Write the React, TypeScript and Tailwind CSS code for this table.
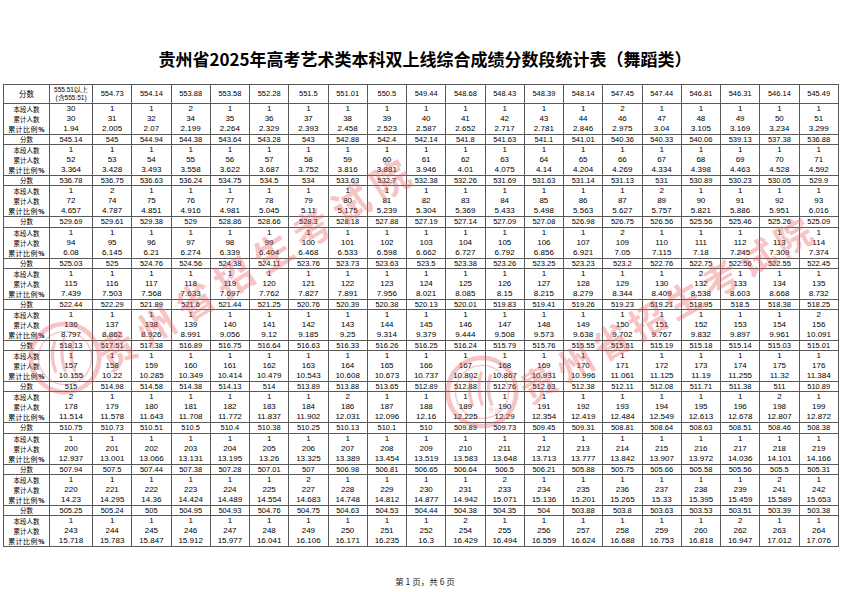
import { Fragment } from 'react';

// 第一行分数（首格单独处理）
const HEAD = '554.73 554.14 553.88 553.58 552.28 551.5 551.01 550.5 549.44 548.68 548.43 548.39 548.14 547.45 547.44 546.81 546.31 546.14 545.49'.split(' ');

// 每段累计人数
const CUM = [
  '30 31 32 34 35 36 37 38 39 40 41 42 43 44 46 47 48 49 50 51',
  '52 53 54 55 56 57 58 59 60 61 62 63 64 65 66 67 68 69 70 71',
  '72 74 75 76 77 78 79 80 81 82 83 84 85 86 87 89 90 91 92 93',
  '94 95 96 97 98 99 100 101 102 103 104 105 106 107 109 110 111 112 113 114',
  '115 116 117 118 119 120 121 122 123 124 125 126 127 128 129 130 132 133 134 135',
  '136 137 138 139 140 141 142 143 144 145 146 147 148 149 150 151 152 153 154 156',
  '157 158 159 160 161 162 163 164 165 166 167 168 169 170 171 172 173 174 175 176',
  '178 179 180 181 182 183 184 186 187 188 189 190 191 192 193 194 195 196 198 199',
  '200 201 202 203 204 205 206 207 208 209 210 211 212 213 214 215 216 217 218 219',
  '220 221 222 223 224 225 227 228 229 230 231 233 234 235 236 237 238 239 241 242',
  '243 244 245 246 247 248 249 250 251 252 254 255 256 257 258 259 260 262 263 264',
].map((r) => r.split(' ').map(Number));

// 段与段之间的分数行
const SCORES = [
  '545.14 545 544.94 544.38 543.64 543.28 543 542.88 542.4 542.14 541.8 541.63 541.1 541.01 540.36 540.33 540.06 539.13 537.38 536.88',
  '536.78 536.75 536.63 536.24 534.75 534.5 534 533.63 532.7 532.38 532.26 531.69 531.63 531.14 531.13 531 530.89 530.23 530.05 529.9',
  '529.69 529.61 529.38 529 528.86 528.66 528.3 528.18 527.88 527.19 527.14 527.09 527.08 526.98 526.75 526.56 525.56 525.46 525.26 525.09',
  '525.03 525 524.76 524.56 524.38 524.11 523.76 523.73 523.63 523.5 523.38 523.26 523.25 523.23 523.2 522.76 522.75 522.56 522.55 522.45',
  '522.44 522.29 521.89 521.6 521.44 521.25 520.76 520.39 520.38 520.13 520.01 519.83 519.41 519.26 519.23 519.21 518.95 518.5 518.38 518.25',
  '518.13 517.51 517.38 516.89 516.75 516.64 516.63 516.33 516.26 516.25 516.24 515.79 515.76 515.55 515.51 515.19 515.18 515.14 515.03 515.01',
  '515 514.98 514.58 514.38 514.13 514 513.89 513.88 513.65 512.89 512.88 512.76 512.63 512.38 512.11 512.08 511.71 511.38 511 510.89',
  '510.75 510.73 510.51 510.5 510.4 510.38 510.25 510.13 510.1 510 509.89 509.73 509.45 509.31 508.81 508.64 508.63 508.51 508.46 508.38',
  '507.94 507.5 507.44 507.38 507.28 507.01 507 506.98 506.81 506.65 506.64 506.5 506.21 505.88 505.75 505.66 505.58 505.56 505.5 505.31',
  '505.25 505.24 505 504.95 504.93 504.76 504.75 504.63 504.53 504.44 504.38 504.35 504 503.88 503.8 503.63 503.53 503.51 503.39 503.38',
].map((r) => r.split(' '));

const TOTAL = 1546;
const pct = (c: number) => String(Math.round((c * 100000) / TOTAL) / 1000);

const cell = 'border border-[#5a5a5a] p-0 text-center align-middle';
const num = "font-['Liberation_Sans',Arial,sans-serif]";
const cjk = "font-['Noto_Sans_CJK_SC',sans-serif]";

function Seal({ className }: { className: string }) {
  return (
    <svg viewBox="0 0 80 80" className={className}>
      <circle cx="40" cy="40" r="36" fill="none" stroke="currentColor" strokeWidth="5" />
      <circle cx="40" cy="40" r="28" fill="none" stroke="currentColor" strokeWidth="1.5" />
      <path
        d="M29 24 q-5 14 1 30 M39 20 q-5 16 1 33 M49 23 q-5 14 1 30"
        fill="none"
        stroke="currentColor"
        strokeWidth="3.5"
        strokeLinecap="round"
      />
      <text x="46" y="62" fontSize="7" fill="currentColor" fontFamily="Noto Sans CJK SC">贵州</text>
    </svg>
  );
}

export default function App() {
  return (
    <div className="relative h-[592px] w-[850px] overflow-hidden bg-white text-black">
      <h1 className={`${cjk} pt-[48px] text-center text-[17px] font-bold leading-[22px]`}>
        贵州省2025年高考艺术类本科双上线综合成绩分数段统计表（舞蹈类）
      </h1>

      <table className="mt-[14px] ml-[3px] w-[836px] table-fixed border-collapse">
        <colgroup>
          <col className="w-[46px]" />
          <col className="w-[43px]" />
          {HEAD.map((h) => (
            <col key={h} />
          ))}
        </colgroup>
        <tbody>
          <tr>
            <td className={cell}>
              <div className={`${cjk} flex h-[18px] items-center justify-center text-[7.5px]`}>分数</div>
            </td>
            <td className={cell}>
              <div className={`${num} text-[6.5px] leading-[8px]`}>555.51以上</div>
              <div className={`${num} text-[6.5px] leading-[8px]`}>(含555.51)</div>
            </td>
            {HEAD.map((h) => (
              <td key={h} className={cell}>
                <div className={`${num} text-[7.5px]`}>{h}</div>
              </td>
            ))}
          </tr>

          {CUM.map((row, g) => (
            <Fragment key={g}>
              <tr>
                <td className={cell}>
                  <div className={`${cjk} h-[10px] text-[6.5px] leading-[10px]`}>本段人数</div>
                  <div className={`${cjk} h-[10px] text-[6.5px] leading-[10px]`}>累计人数</div>
                  <div className={`${cjk} h-[10px] text-[7px] leading-[10px] tracking-[0.5px] whitespace-nowrap`}>
                    累计比例<span className={`${num} font-bold`}>%</span>
                  </div>
                </td>
                {row.map((c, i) => {
                  const prev = i === 0 ? (g === 0 ? 0 : CUM[g - 1][19]) : row[i - 1];
                  return (
                    <td key={i} className={cell}>
                      <div className={`${num} text-[8px]`}>
                        <div className="h-[10px] leading-[10px]">{c - prev}</div>
                        <div className="h-[10px] leading-[10px]">{c}</div>
                        <div className="h-[10px] leading-[10px]">{pct(c)}</div>
                      </div>
                    </td>
                  );
                })}
              </tr>
              {g < SCORES.length && (
                <tr>
                  <td className={cell}>
                    <div className={`${cjk} h-[9.2px] text-[6.5px] leading-[9.2px]`}>分数</div>
                  </td>
                  {SCORES[g].map((s, i) => (
                    <td key={i} className={cell}>
                      <div className={`${num} h-[9.2px] text-[7.5px] leading-[9.2px]`}>{s}</div>
                    </td>
                  ))}
                </tr>
              )}
            </Fragment>
          ))}
        </tbody>
      </table>

      <div className={`${cjk} mt-[29px] text-center text-[8.5px] leading-[10px] text-[#222]`}>第 1 页，共 6 页</div>

      {/* 水印 */}
      <div className="pointer-events-none absolute inset-0 text-[#e85a5a] opacity-35">
        <Seal className="absolute top-[320px] left-[27px] h-[76px] w-[76px]" />
        <div
          className={`${cjk} absolute top-[340px] left-[100px] origin-left -rotate-[32deg] text-[38px] leading-[38px] font-bold tracking-[8px] whitespace-nowrap`}
        >
          贵州省招生考试院
        </div>
        <Seal className="absolute top-[354px] left-[444px] h-[76px] w-[76px]" />
        <div
          className={`${cjk} absolute top-[372px] left-[522px] origin-left -rotate-[30deg] text-[36px] leading-[38px] font-bold tracking-[6px] whitespace-nowrap`}
        >
          贵州省招生考试院
        </div>
      </div>
    </div>
  );
}
